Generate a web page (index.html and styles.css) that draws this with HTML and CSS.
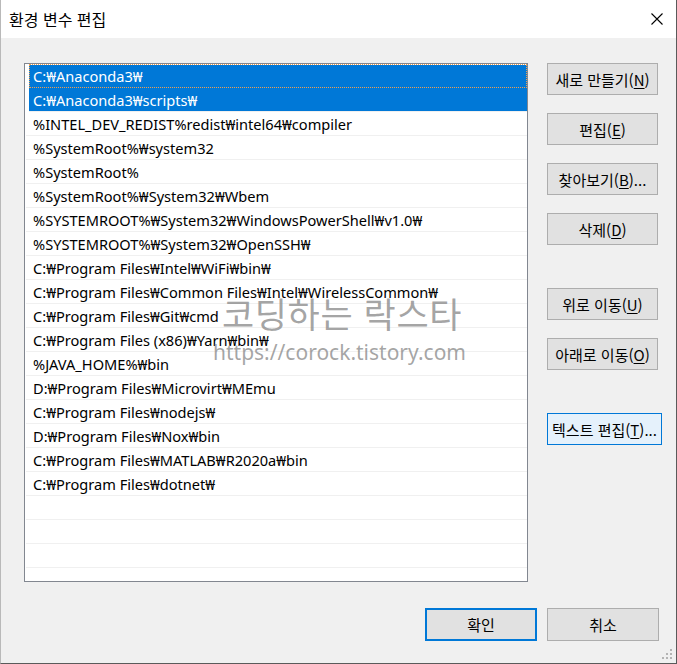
FILE: index.html
```html
<!DOCTYPE html>
<html lang="ko">
<head>
<meta charset="utf-8">
<title>환경 변수 편집</title>
<link rel="stylesheet" href="styles.css">
</head>
<body>
<div class="window">
  <div class="titlebar">
    <span class="title">환경 변수 편집</span>
    <svg class="close" width="12" height="12" viewBox="0 0 12 12"><path d="M0.5 0.5 L11.5 11.5 M11.5 0.5 L0.5 11.5" stroke="#000" stroke-width="1.1" fill="none"/></svg>
  </div>
  <div class="content">
    <div class="main">
      <div class="list">
        <div class="row sel first focus">C:₩Anaconda3₩</div>
        <div class="row sel">C:₩Anaconda3₩scripts₩</div>
        <div class="row">%INTEL_DEV_REDIST%redist₩intel64₩compiler</div>
        <div class="row">%SystemRoot%₩system32</div>
        <div class="row">%SystemRoot%</div>
        <div class="row">%SystemRoot%₩System32₩Wbem</div>
        <div class="row">%SYSTEMROOT%₩System32₩WindowsPowerShell₩v1.0₩</div>
        <div class="row">%SYSTEMROOT%₩System32₩OpenSSH₩</div>
        <div class="row">C:₩Program Files₩Intel₩WiFi₩bin₩</div>
        <div class="row">C:₩Program Files₩Common Files₩Intel₩WirelessCommon₩</div>
        <div class="row">C:₩Program Files₩Git₩cmd</div>
        <div class="row">C:₩Program Files (x86)₩Yarn₩bin₩</div>
        <div class="row">%JAVA_HOME%₩bin</div>
        <div class="row">D:₩Program Files₩Microvirt₩MEmu</div>
        <div class="row">C:₩Program Files₩nodejs₩</div>
        <div class="row">D:₩Program Files₩Nox₩bin</div>
        <div class="row">C:₩Program Files₩MATLAB₩R2020a₩bin</div>
        <div class="row">C:₩Program Files₩dotnet₩</div>
        <div class="row"></div>
        <div class="row"></div>
        <div class="row"></div>
        <div class="row"></div>
      </div>
      <div class="side">
        <button class="btn">새로 만들기(<u>N</u>)</button>
        <button class="btn">편집(<u>E</u>)</button>
        <button class="btn">찾아보기(<u>B</u>)...</button>
        <button class="btn">삭제(<u>D</u>)</button>
        <button class="btn spaced">위로 이동(<u>U</u>)</button>
        <button class="btn">아래로 이동(<u>O</u>)</button>
        <button class="btn spaced hover wide">텍스트 편집(<u>T</u>)...</button>
      </div>
    </div>
    <div class="footer">
      <button class="btn default">확인</button>
      <button class="btn">취소</button>
    </div>
  </div>
  <svg class="grip" width="12" height="12" viewBox="0 0 12 12">
    <rect x="9" y="1" width="2" height="2" fill="#b4b4b4"/>
    <rect x="5" y="5" width="2" height="2" fill="#b4b4b4"/>
    <rect x="9" y="5" width="2" height="2" fill="#b4b4b4"/>
    <rect x="1" y="9" width="2" height="2" fill="#b4b4b4"/>
    <rect x="5" y="9" width="2" height="2" fill="#b4b4b4"/>
    <rect x="9" y="9" width="2" height="2" fill="#b4b4b4"/>
  </svg>
  <div class="watermark">
    <div class="wm-title">코딩하는 락스타</div>
    <div class="wm-url">https://corock.tistory.com</div>
  </div>
</div>
</body>
</html>
```
FILE: styles.css
```css
* { box-sizing: border-box; }
html, body { margin: 0; padding: 0; background: #f0f0f0; }
body { font-family: "Noto Sans", "Noto Sans CJK KR", sans-serif; }

.window {
  position: relative;
  width: 677px;
  height: 664px;
  background: #f0f0f0;
  border-left: 1px solid #b9b9b9;
  border-right: 1px solid #5a5a5a;
  border-bottom: 1px solid #5a5a5a;
  overflow: hidden;
}

.titlebar {
  height: 38px;
  background: #fff;
  display: flex;
  align-items: center;
  justify-content: space-between;
  padding: 0 13px 0 8px;
}
.title {
  font-family: "Noto Sans CJK KR", sans-serif;
  font-size: 16px;
  color: #000;
}
.close { display: block; }

.content {
  padding: 25px 0 0 23px;
}
.main {
  display: flex;
  gap: 19px;
}
.list {
  width: 504px;
  height: 519px;
  background: #fff;
  border: 1px solid #828790;
  padding-left: 1px;
  overflow: hidden;
}
.row {
  height: 24px;
  border-bottom: 1px solid #f0f0f0;
  padding-left: 7px;
  font-size: 14.6px;
  line-height: 25px;
  color: #000;
  white-space: nowrap;
  overflow: hidden;
}
.row.sel {
  background: #0078d7;
  color: #fff;
  margin-left: 3px;
  padding-left: 4px;
  border-bottom-color: #0078d7;
}
.row.first {
  height: 24px;
  border-top: 1px solid #fff;
  line-height: 23px;
}
.row.sel:not(.first) { border-bottom-color: #f0f0f0; }
.row.focus {
  outline: 1px dotted #f0a050;
  outline-offset: -1px;
}

.side {
  display: flex;
  flex-direction: column;
  gap: 18px;
}
.btn {
  width: 111px;
  height: 32px;
  background: #e1e1e1;
  border: 1px solid #adadad;
  border-radius: 0;
  padding: 0;
  margin: 0;
  font-family: "Noto Sans CJK KR", sans-serif;
  font-size: 15px;
  color: #000;
  white-space: nowrap;
  display: flex;
  align-items: center;
  justify-content: center;
}
.btn u { text-underline-offset: 2px; }
.btn.spaced { margin-top: 25px; }
.btn.hover {
  background: #e5f1fb;
  border-color: #0078d7;
}
.btn.wide { width: 115px; }

.footer {
  display: flex;
  gap: 10px;
  margin-top: 26px;
  padding-left: 401px;
}
.footer .btn { height: 33px; width: 112px; }
.btn.default {
  border: 2px solid #0078d7;
}

.grip {
  position: absolute;
  right: 3px;
  bottom: 3px;
}

.watermark {
  position: absolute;
  left: 212px;
  top: 288px;
  color: rgba(140, 140, 140, 0.78);
  pointer-events: none;
}
.wm-title {
  font-family: "Noto Sans CJK KR", sans-serif;
  font-size: 35px;
  line-height: 50px;
  padding-left: 9px;
  letter-spacing: 0.6px;
}
.wm-url {
  font-family: "Noto Sans", sans-serif;
  font-size: 21px;
  line-height: 28px;
}
```
